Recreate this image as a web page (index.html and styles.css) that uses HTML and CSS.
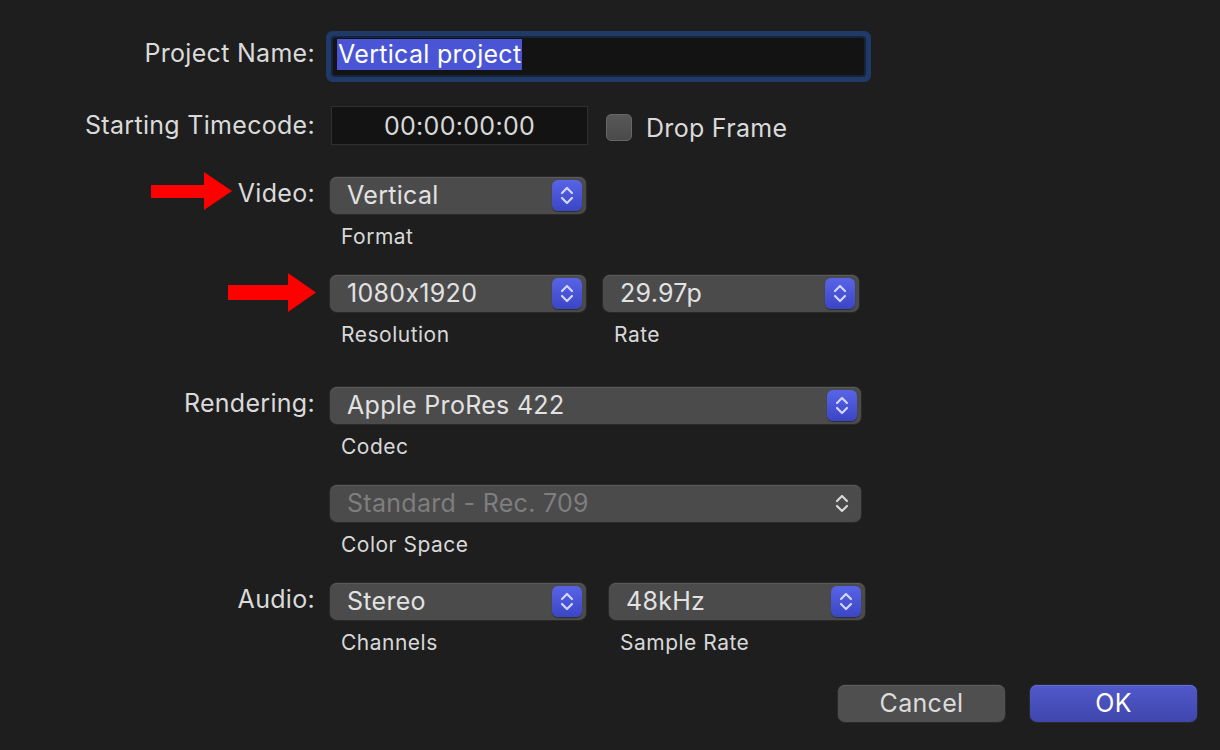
FILE: index.html
```html
<!DOCTYPE html>
<html lang="en">
<head>
  <meta charset="UTF-8" />
  <title>New Project</title>
  <link rel="stylesheet" href="styles.css">
</head>
<body>
  <form class="dialog">

    <!-- project name -->
    <div class="row row-name">
      <div class="label">Project Name:</div>
      <div class="name-field"><span class="sel">Vertical project</span></div>
    </div>

    <!-- timecode -->
    <div class="row row-tc">
      <div class="label">Starting Timecode:</div>
      <div class="ctrls">
        <div class="tc-field">00:00:00:00</div>
        <label class="check"><span class="box"></span>Drop Frame</label>
      </div>
    </div>

    <!-- video -->
    <div class="row row-video">
      <div class="label">
        <svg class="arrow" width="81" height="38" viewBox="0 0 81 38"><polygon points="0,13 53,13 53,0 81,19 53,38 53,26 0,26" fill="#ff0000"/></svg>
        <span>Video:</span>
      </div>
      <div class="ctrls">
        <div class="field">
          <div class="popup short">Vertical<span class="stepper"><svg width="30" height="31" viewBox="0 0 30 31"><polyline points="10,13 15,8 20,13"/><polyline points="10,18 15,23 20,18"/></svg></span></div>
          <div class="sub">Format</div>
        </div>
      </div>
    </div>

    <div class="row row-res">
      <div class="label">
        <svg class="arrow" width="88" height="39" viewBox="0 0 88 39"><polygon points="0,12 60,12 60,0 88,19.5 60,39 60,27 0,27" fill="#ff0000"/></svg>
      </div>
      <div class="ctrls gap-17">
        <div class="field">
          <div class="popup short">1080x1920<span class="stepper"><svg width="30" height="31" viewBox="0 0 30 31"><polyline points="10,13 15,8 20,13"/><polyline points="10,18 15,23 20,18"/></svg></span></div>
          <div class="sub">Resolution</div>
        </div>
        <div class="field">
          <div class="popup short">29.97p<span class="stepper"><svg width="30" height="31" viewBox="0 0 30 31"><polyline points="10,13 15,8 20,13"/><polyline points="10,18 15,23 20,18"/></svg></span></div>
          <div class="sub">Rate</div>
        </div>
      </div>
    </div>

    <!-- rendering -->
    <div class="row row-render">
      <div class="label">Rendering:</div>
      <div class="ctrls">
        <div class="field">
          <div class="popup wide">Apple ProRes 422<span class="stepper"><svg width="30" height="31" viewBox="0 0 30 31"><polyline points="10,13 15,8 20,13"/><polyline points="10,18 15,23 20,18"/></svg></span></div>
          <div class="sub">Codec</div>
        </div>
      </div>
    </div>

    <div class="row row-space">
      <div class="label"></div>
      <div class="ctrls">
        <div class="field">
          <div class="popup wide disabled">Standard - Rec. 709<span class="stepper plain"><svg width="30" height="31" viewBox="0 0 30 31"><polyline points="10,13 15,8 20,13"/><polyline points="10,18 15,23 20,18"/></svg></span></div>
          <div class="sub">Color Space</div>
        </div>
      </div>
    </div>

    <!-- audio -->
    <div class="row row-audio">
      <div class="label">Audio:</div>
      <div class="ctrls gap-23">
        <div class="field">
          <div class="popup short">Stereo<span class="stepper"><svg width="30" height="31" viewBox="0 0 30 31"><polyline points="10,13 15,8 20,13"/><polyline points="10,18 15,23 20,18"/></svg></span></div>
          <div class="sub">Channels</div>
        </div>
        <div class="field">
          <div class="popup short">48kHz<span class="stepper"><svg width="30" height="31" viewBox="0 0 30 31"><polyline points="10,13 15,8 20,13"/><polyline points="10,18 15,23 20,18"/></svg></span></div>
          <div class="sub">Sample Rate</div>
        </div>
      </div>
    </div>

    <div class="buttons">
      <button type="button" class="btn">Cancel</button>
      <button type="button" class="btn primary">OK</button>
    </div>
  </form>
</body>
</html>
```

FILE: styles.css
```css
:root{
  --bg:#1e1e1e;
  --text:#dadada;
  --popup:#4b4b4b;
  --blue:#4b55d8;
}
*{box-sizing:border-box;}
html,body{margin:0;background:var(--bg);}
body{
  font-family:Inter,"Liberation Sans",sans-serif;
  color:var(--text);
  width:1220px;
  height:750px;
  overflow:hidden;
}

.dialog{padding-top:34px;}

/* 行 */
.row{
  display:grid;
  grid-template-columns:315px auto;
  column-gap:15px;
  align-items:start;
}
.label{
  height:37px;
  padding-bottom:5px;
  display:flex;
  align-items:center;
  justify-content:flex-end;
  gap:6px;
  font-size:25px;
  letter-spacing:.3px;
  white-space:nowrap;
}
.label .arrow{margin-bottom:4px;}
.ctrls{display:flex;align-items:flex-start;}
.gap-17{gap:17px;}
.gap-23{gap:23px;}

.row-name .label{height:44px;padding-bottom:6px;}
.row-tc{margin-top:28px;}
.row-tc .label{height:39px;padding-bottom:2px;}
.row-video{margin-top:32px;}
.row-res{margin-top:26px;}
.row-res .label{padding-bottom:0;}
.row-res .arrow{margin:0 -1px 2px 0;}
.row-render{margin-top:40px;}
.row-space{margin-top:26px;}
.row-audio{margin-top:26px;}

/* プロジェクト名 */
.name-field{
  width:531px;
  height:37px;
  margin:4px 0 0 3px;
  background:#131313;
  border-radius:2px;
  box-shadow:0 0 0 2px #16233b, 0 0 0 7px #1f3a67;
  padding:1px 4px;
  font-size:25px;
  letter-spacing:.3px;
}
.sel{
  display:inline-block;
  background:#4a55d6;
  color:#fff;
  line-height:31px;
  padding:0 1px;
}

/* タイムコード */
.tc-field{
  width:257px;
  height:39px;
  margin-left:1px;
  background:#131313;
  border:1px solid #2f2f2f;
  display:flex;
  align-items:center;
  justify-content:center;
  font-size:25px;
  letter-spacing:.3px;
  color:#d8d8d8;
}
.check{
  display:flex;
  align-items:center;
  gap:14px;
  margin-left:18px;
  height:39px;
  font-size:25px;
  letter-spacing:.3px;
  padding-top:4px;
}
.box{
  width:26px;
  height:27px;
  border-radius:5px;
  background:linear-gradient(#585858,#4a4a4a);
  border:1px solid #666;
}

/* ポップアップ */
.popup{
  position:relative;
  height:37px;
  background:var(--popup);
  border-radius:7px;
  box-shadow:0 0 0 1px #2a2a2a, inset 0 1px 0 #5a5a5a;
  padding-left:17px;
  padding-bottom:2px;
  display:flex;
  align-items:center;
  font-size:25px;
  color:#e2e2e2;
  letter-spacing:.3px;
}
.popup.short{width:256px;}
.popup.wide{width:531px;}
.popup.disabled{color:#7e7e7e;}

.stepper{
  position:absolute;
  right:4px;
  top:3px;
  width:30px;
  height:31px;
  border-radius:6px;
  background:linear-gradient(#5864e6,#3b46c6);
  box-shadow:0 1px 1px rgba(0,0,0,.4);
}
.stepper svg{display:block;}
.stepper polyline{fill:none;stroke:#d2d5ff;stroke-width:2.2;stroke-linecap:round;stroke-linejoin:round;}
.stepper.plain{background:none;box-shadow:none;}
.stepper.plain polyline{stroke:#d8d8d8;}

.sub{
  margin-top:11px;
  margin-left:11px;
  line-height:24px;
  font-size:21px;
  letter-spacing:.5px;
  color:#d8d8d8;
}

/* ボタン */
.buttons{
  display:flex;
  justify-content:flex-end;
  gap:25px;
  margin-top:30px;
  padding-right:23px;
}
.btn{
  width:167px;
  height:37px;
  border:none;
  border-radius:7px;
  background:#4f4f4f;
  box-shadow:0 0 0 1px #2a2a2a, inset 0 1px 0 #5e5e5e;
  color:#dcdcdc;
  font-family:inherit;
  font-size:25px;
  letter-spacing:.3px;
  padding:0 0 2px;
}
.btn.primary{
  background:linear-gradient(#5159cc,#3f46ac);
  box-shadow:0 0 0 1px #2a2a2a, inset 0 1px 0 #626ad8;
  color:#fff;
}
```
